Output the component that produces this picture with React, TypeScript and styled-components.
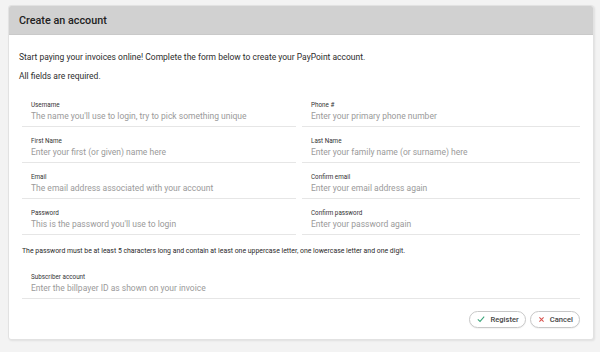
import React from 'react';
import styled, {createGlobalStyle} from 'styled-components';

const GlobalStyle = createGlobalStyle`
  html, body {
    margin: 0;
    padding: 0;
    background: #f3f3f3;
    font-family: Roboto, "Liberation Sans", Arial, sans-serif;
  }
`

const Page = styled.div`
  width: 600px;
  height: 352px;
  padding: 5px 6px 0 8px;
  box-sizing: border-box;
`

const Card = styled.div`
  width: 586px;
  height: 335px;
  background: #fff;
  border: 1px solid #e2e2e2;
  border-radius: 3px;
  box-shadow: 1px 1px 2px rgba(0, 0, 0, 0.08);
  box-sizing: border-box;
  display: flex;
  flex-direction: column;
  overflow: hidden;
`

const Header = styled.div`
  height: 29px;
  flex: none;
  background: #d1d1d1;
  display: flex;
  align-items: center;
  padding-left: 10px;
  box-sizing: border-box;
  font-size: 10.8px;
  font-weight: 500;
  color: #222;
  border-bottom: 1px solid #c9c9c9;
`

const Body = styled.div`
  padding: 17px 13px 0 10px;
  display: flex;
  flex-direction: column;
`

const Intro = styled.p`
  margin: 0 0 8px;
  font-size: 8.5px;
  line-height: 11px;
  color: #2d2d2d;
`

const Grid = styled.div<{$first?: boolean}>`
  margin: ${p => (p.$first ? '0.5px' : '0')} 0 0 3px;
  display: grid;
  grid-template-columns: 274px 278px;
  column-gap: 6px;
`

const Field = styled.div<{$wide?: boolean}>`
  grid-column: ${p => (p.$wide ? '1 / span 2' : 'auto')};
  height: 36px;
  padding: 10px 0 0 9px;
  box-sizing: border-box;
  border-bottom: 1px solid #e6e6e6;
  display: flex;
  flex-direction: column;
`

const Label = styled.span`
  font-size: 6.3px;
  line-height: 8px;
  color: #333;
`

const Placeholder = styled.span`
  margin-top: 2.5px;
  font-size: 8.5px;
  line-height: 11px;
  color: #9a9a9a;
`

const Note = styled.p`
  margin: 12.5px 0 6.5px 3px;
  font-size: 6.9px;
  line-height: 9px;
  color: #2a2a2a;
`

const Actions = styled.div`
  display: flex;
  justify-content: flex-end;
  gap: 4px;
  margin-top: 12px;
`

const Button = styled.button`
  height: 17px;
  padding: 0 6px 0 7px;
  border: 1px solid #c8c8c8;
  border-radius: 9px;
  background: #fff;
  display: flex;
  align-items: center;
  gap: 5px;
  font-family: inherit;
  font-size: 7.6px;
  font-weight: 500;
  color: #454545;
  box-shadow: 0 1px 1px rgba(0, 0, 0, 0.05);
`

const fields: [string, string][] = [
  ['Username', 'The name you\'ll use to login, try to pick something unique'],
  ['Phone #', 'Enter your primary phone number'],
  ['First Name', 'Enter your first (or given) name here'],
  ['Last Name', 'Enter your family name (or surname) here'],
  ['Email', 'The email address associated with your account'],
  ['Confirm email', 'Enter your email address again'],
  ['Password', 'This is the password you\'ll use to login'],
  ['Confirm password', 'Enter your password again'],
];

export default function App() {
  return (
    <Page>
      <GlobalStyle />
      <Card>
        <Header>Create an account</Header>
        <Body>
          <Intro>Start paying your invoices online! Complete the form below to create your PayPoint account.</Intro>
          <Intro>All fields are required.</Intro>
          <Grid $first>
            {fields.map(([label, hint]) => (
              <Field key={label}>
                <Label>{label}</Label>
                <Placeholder>{hint}</Placeholder>
              </Field>
            ))}
          </Grid>
          <Note>
            The password must be at least 5 characters long and contain at least one uppercase letter, one lowercase letter and one digit.
          </Note>
          <Grid>
            <Field $wide>
              <Label>Subscriber account</Label>
              <Placeholder>Enter the billpayer ID as shown on your invoice</Placeholder>
            </Field>
          </Grid>
          <Actions>
            <Button>
              <svg width='8' height='8' viewBox='0 0 10 10'>
                <path d='M1 5.5 L3.8 8 L9 2' fill='none' stroke='#3aa57a' strokeWidth='1.3'/>
              </svg>
              Register
            </Button>
            <Button>
              <svg width='7' height='7' viewBox='0 0 10 10'>
                <path d='M2 2 L8 8 M8 2 L2 8' fill='none' stroke='#d9534f' strokeWidth='1.5'/>
              </svg>
              Cancel
            </Button>
          </Actions>
        </Body>
      </Card>
    </Page>
  );
}
